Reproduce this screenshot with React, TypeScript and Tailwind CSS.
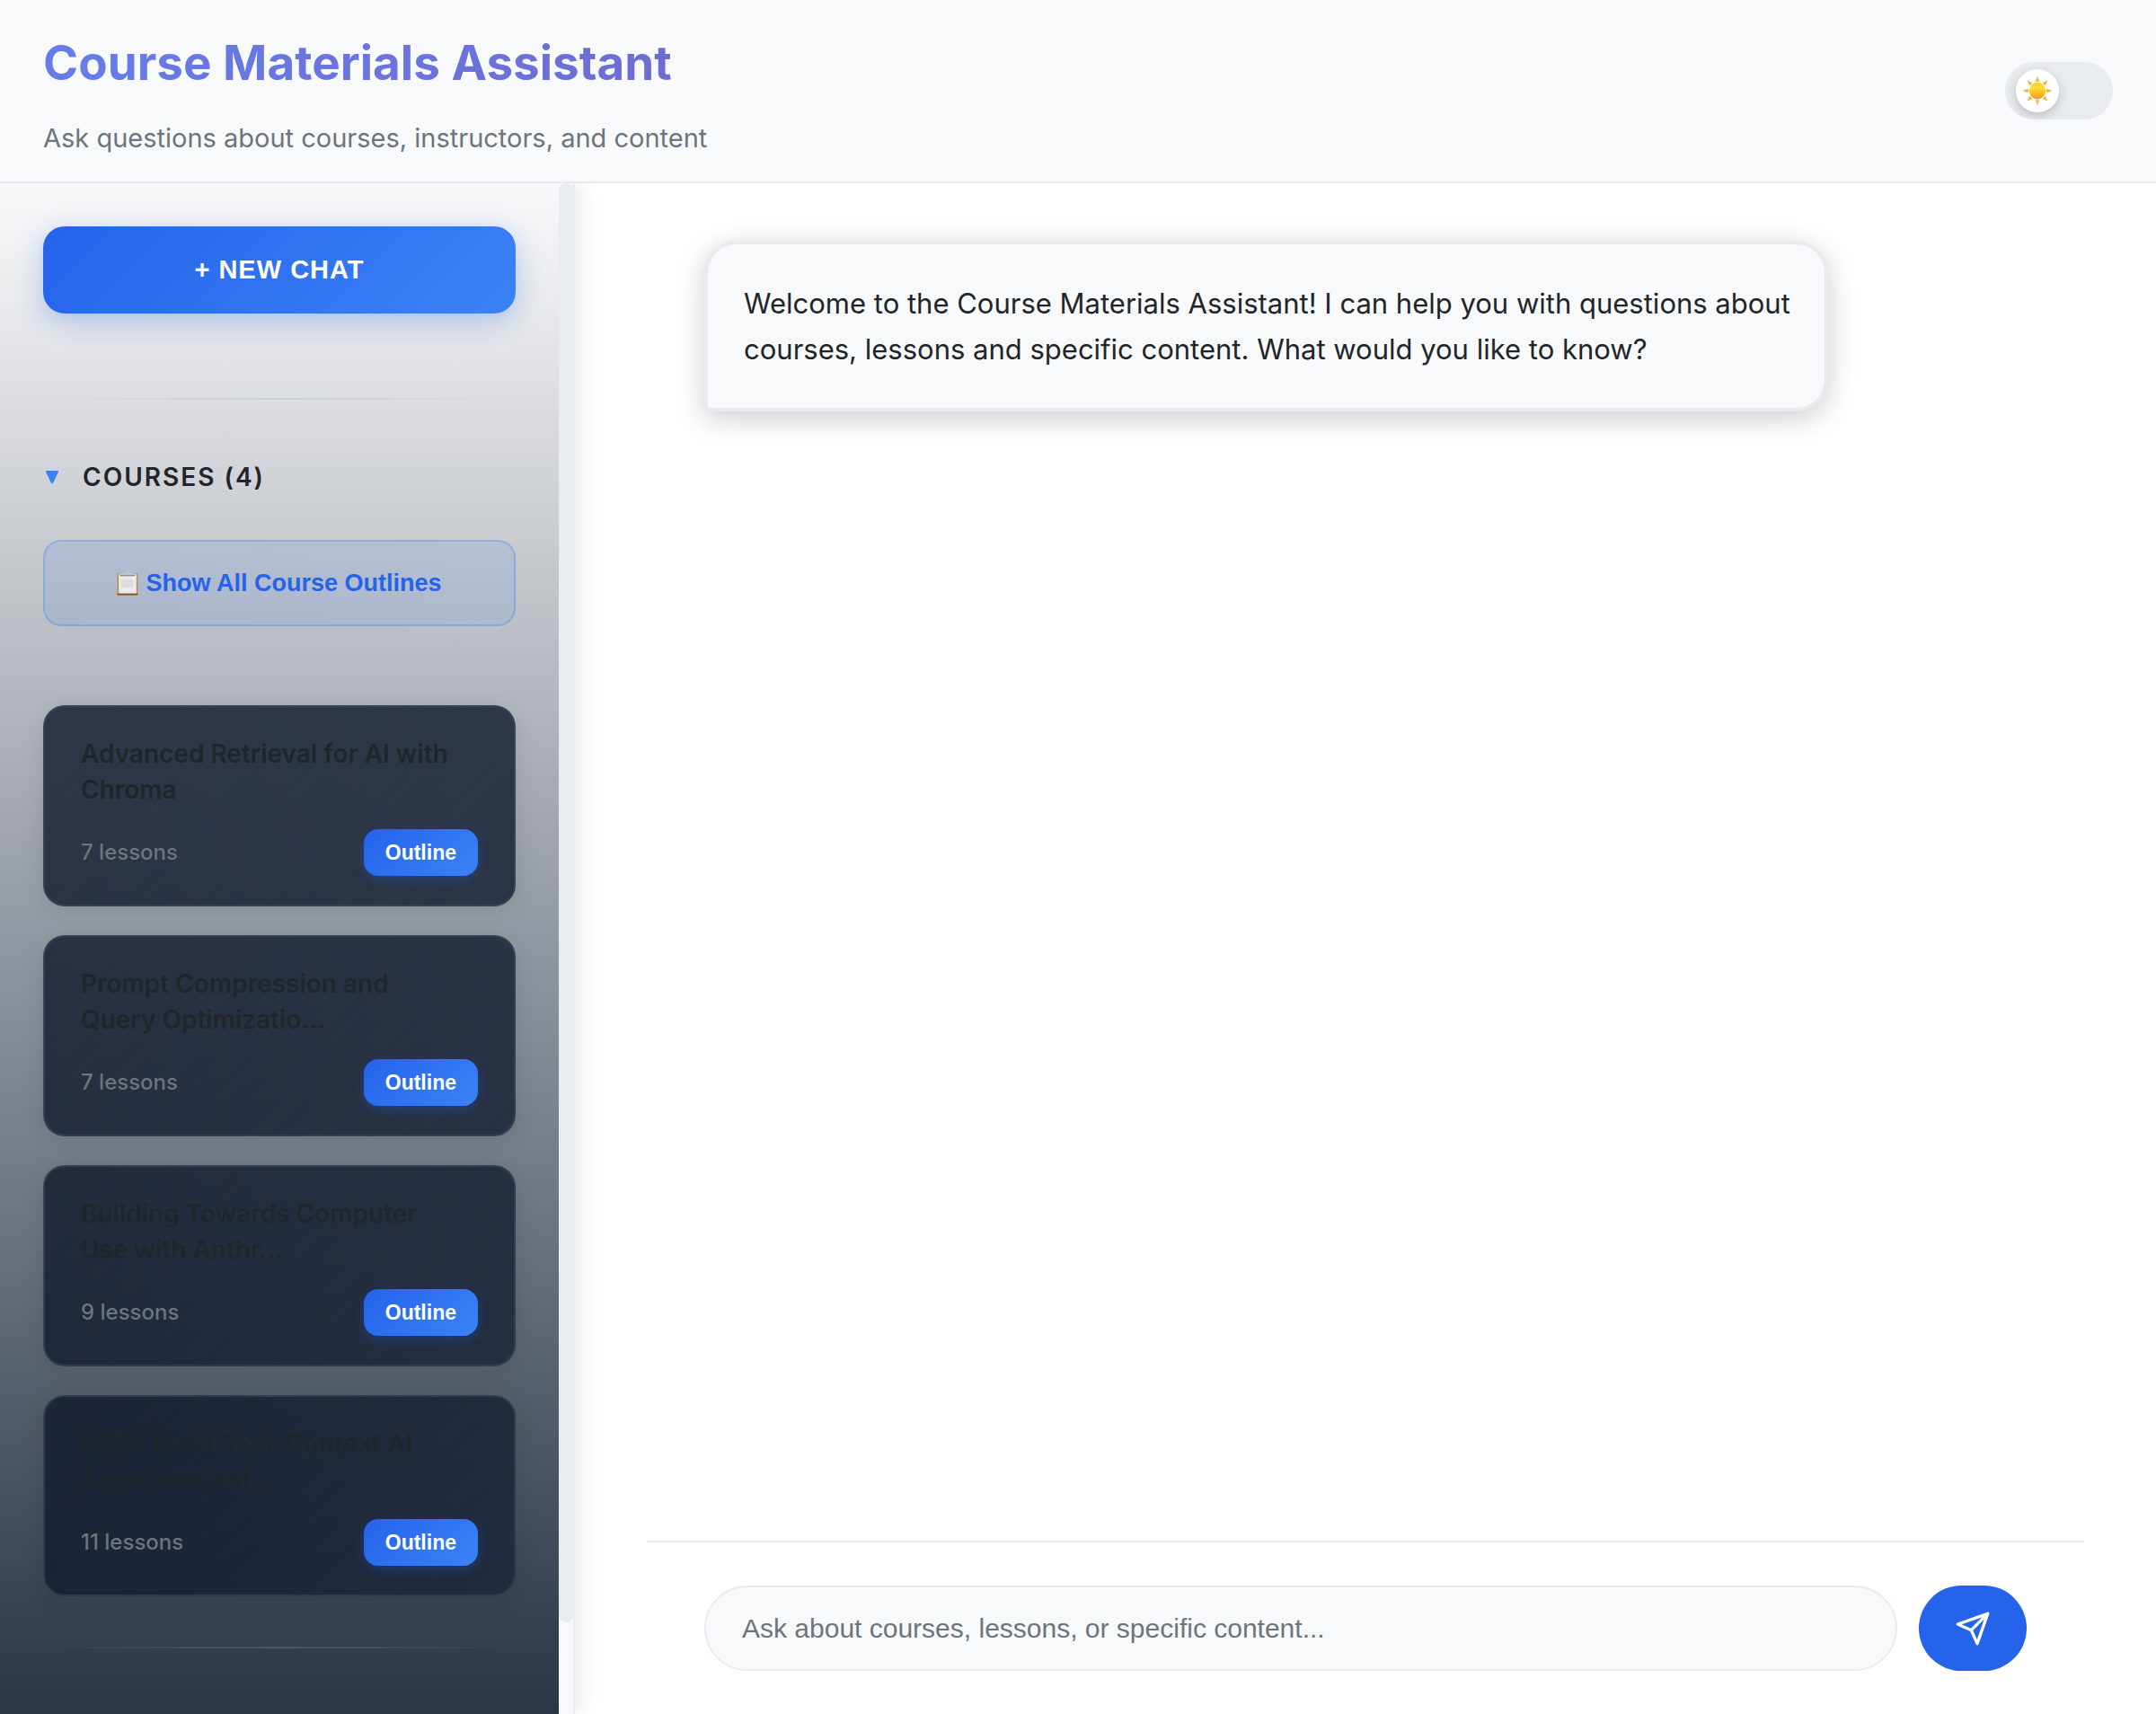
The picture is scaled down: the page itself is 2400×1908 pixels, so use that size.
const courses = [
  { title: 'Advanced Retrieval for AI with Chroma', lessons: 7 },
  { title: 'Prompt Compression and Query Optimizatio...', lessons: 7 },
  { title: 'Building Towards Computer Use with Anthr...', lessons: 9 },
  { title: 'MCP: Build Rich-Context AI Apps with Ant...', lessons: 11 },
];

const rays = [0, 45, 90, 135, 180, 225, 270, 315];

function SunIcon() {
  return (
    <svg viewBox="0 0 32 32" className="size-8" aria-hidden="true">
      <defs>
        <linearGradient id="sun" x1="0" y1="0" x2="0" y2="1">
          <stop offset="0" stopColor="#fbc52d" />
          <stop offset="0.3" stopColor="#fde038" />
          <stop offset="1" stopColor="#f8961c" />
        </linearGradient>
      </defs>
      {rays.map((a) => (
        <path key={a} d="M16 0.4 L17.9 5.4 Q16 6.2 14.1 5.4 Z" fill="#f9bb2d" stroke="#e9a04a" strokeWidth="0.5" transform={`rotate(${a} 16 16)`} />
      ))}
      <circle cx="16" cy="16" r="9.2" fill="url(#sun)" />
    </svg>
  );
}

function ClipboardIcon() {
  return (
    <svg viewBox="0 0 24 28" className="h-7 w-6 shrink-0" aria-hidden="true">
      <rect x="0.5" y="3" width="23" height="24.5" rx="1.5" fill="#b98d55" />
      <rect x="0.5" y="25.5" width="23" height="2" rx="1" fill="#7c5426" />
      <rect x="2.2" y="4" width="19.6" height="21.5" fill="#ebebec" />
      <rect x="5" y="10" width="13" height="9" fill="#dcdcdd" />
      <path d="M3 6 L3 4 Q3 3 5 3 H9.5 Q9.8 0.6 12 0.6 Q14.2 0.6 14.5 3 H19 Q21 3 21 4 L21 6 Z" fill="#bdc6cc" />
      <rect x="4" y="5.2" width="16" height="1.2" fill="#85888a" />
    </svg>
  );
}

function CourseCard({ title, lessons }: { title: string; lessons: number }) {
  return (
    <li className="rounded-3xl border-2 border-[rgba(71,85,105,0.45)] bg-[linear-gradient(135deg,rgba(15,23,42,0.8),rgba(30,41,59,0.9))] px-10 py-8 shadow-[0_4px_24px_rgba(0,0,0,0.1)]">
      <h3 className="pr-4 text-[28px] leading-10 font-semibold text-[#212529]">{title}</h3>
      <div className="mt-6 flex items-center justify-between">
        <span className="text-2xl font-medium text-[#6c757d]">{lessons} lessons</span>
        <button
          type="button"
          className="h-13 rounded-2xl bg-[linear-gradient(135deg,#2563eb,#3b82f6)] px-6 font-['Liberation_Sans',sans-serif] text-[23px] leading-7 font-bold text-white shadow-[0_4px_12px_rgba(37,99,235,0.3)]"
        >
          Outline
        </button>
      </div>
    </li>
  );
}

const divider = 'h-0.5 bg-[linear-gradient(90deg,transparent,rgba(148,163,184,0.25),transparent)]';

export default function App() {
  return (
    <div className="flex h-screen flex-col overflow-hidden bg-white font-[Inter,sans-serif] text-[#212529]">
      <header className="relative z-20 flex items-center justify-between border-b-2 border-[#e9ecef] bg-[#f8f9fa] px-12 py-7">
        <div className="grow">
          <h1 className="bg-[linear-gradient(135deg,#667eea,#764ba2)] bg-clip-text text-[53px] leading-[84px] font-bold text-transparent">
            Course Materials Assistant
          </h1>
          <p className="mt-[22px] text-[29px] leading-10 text-[#6c757d]">Ask questions about courses, instructors, and content</p>
        </div>
        <button
          type="button"
          role="switch"
          aria-checked="false"
          aria-label="Toggle theme"
          className="flex h-16 w-30 items-center overflow-hidden rounded-full bg-[#e9ecef] px-3"
        >
          <span className="flex size-12 items-center justify-center rounded-full bg-white shadow-[0_4px_12px_rgba(0,0,0,0.2)]">
            <SunIcon />
          </span>
        </button>
      </header>

      <div className="flex min-h-0 grow">
        <aside className="relative z-10 flex w-160 shrink-0 border-r-2 border-[#e9ecef] shadow-[4px_0_24px_rgba(0,0,0,0.1)]">
          <div className="min-w-0 grow overflow-hidden bg-[linear-gradient(180deg,#f8f9fa,#2a3546)] px-12 pt-12">
            <button
              type="button"
              className="block h-[97px] w-full rounded-3xl bg-[linear-gradient(135deg,#2563eb,#3b82f6)] font-['Liberation_Sans',sans-serif] text-[29px] font-bold tracking-[1px] text-white shadow-[0_8px_30px_rgba(37,99,235,0.3)]"
            >
              + NEW CHAT
            </button>
            <div className={`mt-[94px] ${divider}`} />
            <button type="button" aria-expanded="true" className="mt-16 flex h-11 items-center gap-[26px] text-[28px] font-semibold tracking-[2px]">
              <svg viewBox="0 0 16 16" className="ml-0.5 size-4" aria-hidden="true">
                <path d="M2 2 H14 L8 14.5 Z" fill="#3b82f6" stroke="#3b82f6" strokeWidth="2" strokeLinejoin="round" />
              </svg>
              COURSES (4)
            </button>
            <button
              type="button"
              className="mt-12 flex h-24 w-full items-center justify-center gap-2 rounded-[20px] border-2 border-[rgba(59,130,246,0.3)] bg-[linear-gradient(135deg,rgba(37,99,235,0.12),rgba(59,130,246,0.12))] font-['Liberation_Sans',sans-serif] text-[27px] font-bold text-[#2563eb]"
            >
              <ClipboardIcon />
              Show All Course Outlines
            </button>
            <ul className="mt-22 flex flex-col gap-8">
              {courses.map((c) => (
                <CourseCard key={c.title} title={c.title} lessons={c.lessons} />
              ))}
            </ul>
            <div className={`mt-14 ${divider}`} />
          </div>
          <div className="w-4 shrink-0 bg-[#f8f9fa]">
            <div className="h-[94%] rounded-full bg-[#e9ecef]" />
          </div>
        </aside>

        <main className="flex min-w-0 grow justify-center px-20">
          <div className="flex w-full max-w-[1600px] flex-col">
            <div className="grow px-16 pt-16">
              <div className="max-w-[85%] rounded-[36px] rounded-bl-lg border-4 border-[#e9ecef] bg-[#f8f9fa] py-10 pr-8 pl-10 text-[31px] leading-[51px] shadow-[0_8px_32px_rgba(0,0,0,0.2)]">
                Welcome to the Course Materials Assistant! I can help you with questions about courses, lessons and specific content. What
                would you like to know?
              </div>
            </div>
            <form className="flex gap-6 border-t-2 border-[#e9ecef] px-16 py-12" onSubmit={(e) => e.preventDefault()}>
              <input
                type="text"
                aria-label="Your question"
                placeholder="Ask about courses, lessons, or specific content..."
                className="h-[95px] min-w-0 grow rounded-[48px] border-2 border-[#e9ecef] bg-[#f8f9fa] px-10 font-['Liberation_Sans',sans-serif] text-[30px] placeholder:text-[#6c757d]"
              />
              <button type="submit" aria-label="Send" className="flex h-[95px] w-30 items-center justify-center rounded-[48px] bg-[#2563eb] text-white">
                <svg viewBox="0 0 24 24" className="size-10" fill="none" stroke="currentColor" strokeWidth="2" strokeLinecap="round" strokeLinejoin="round" aria-hidden="true">
                  <path d="M22 2L11 13" />
                  <path d="M22 2L15 22L11 13L2 9L22 2Z" />
                </svg>
              </button>
            </form>
          </div>
        </main>
      </div>
    </div>
  );
}
